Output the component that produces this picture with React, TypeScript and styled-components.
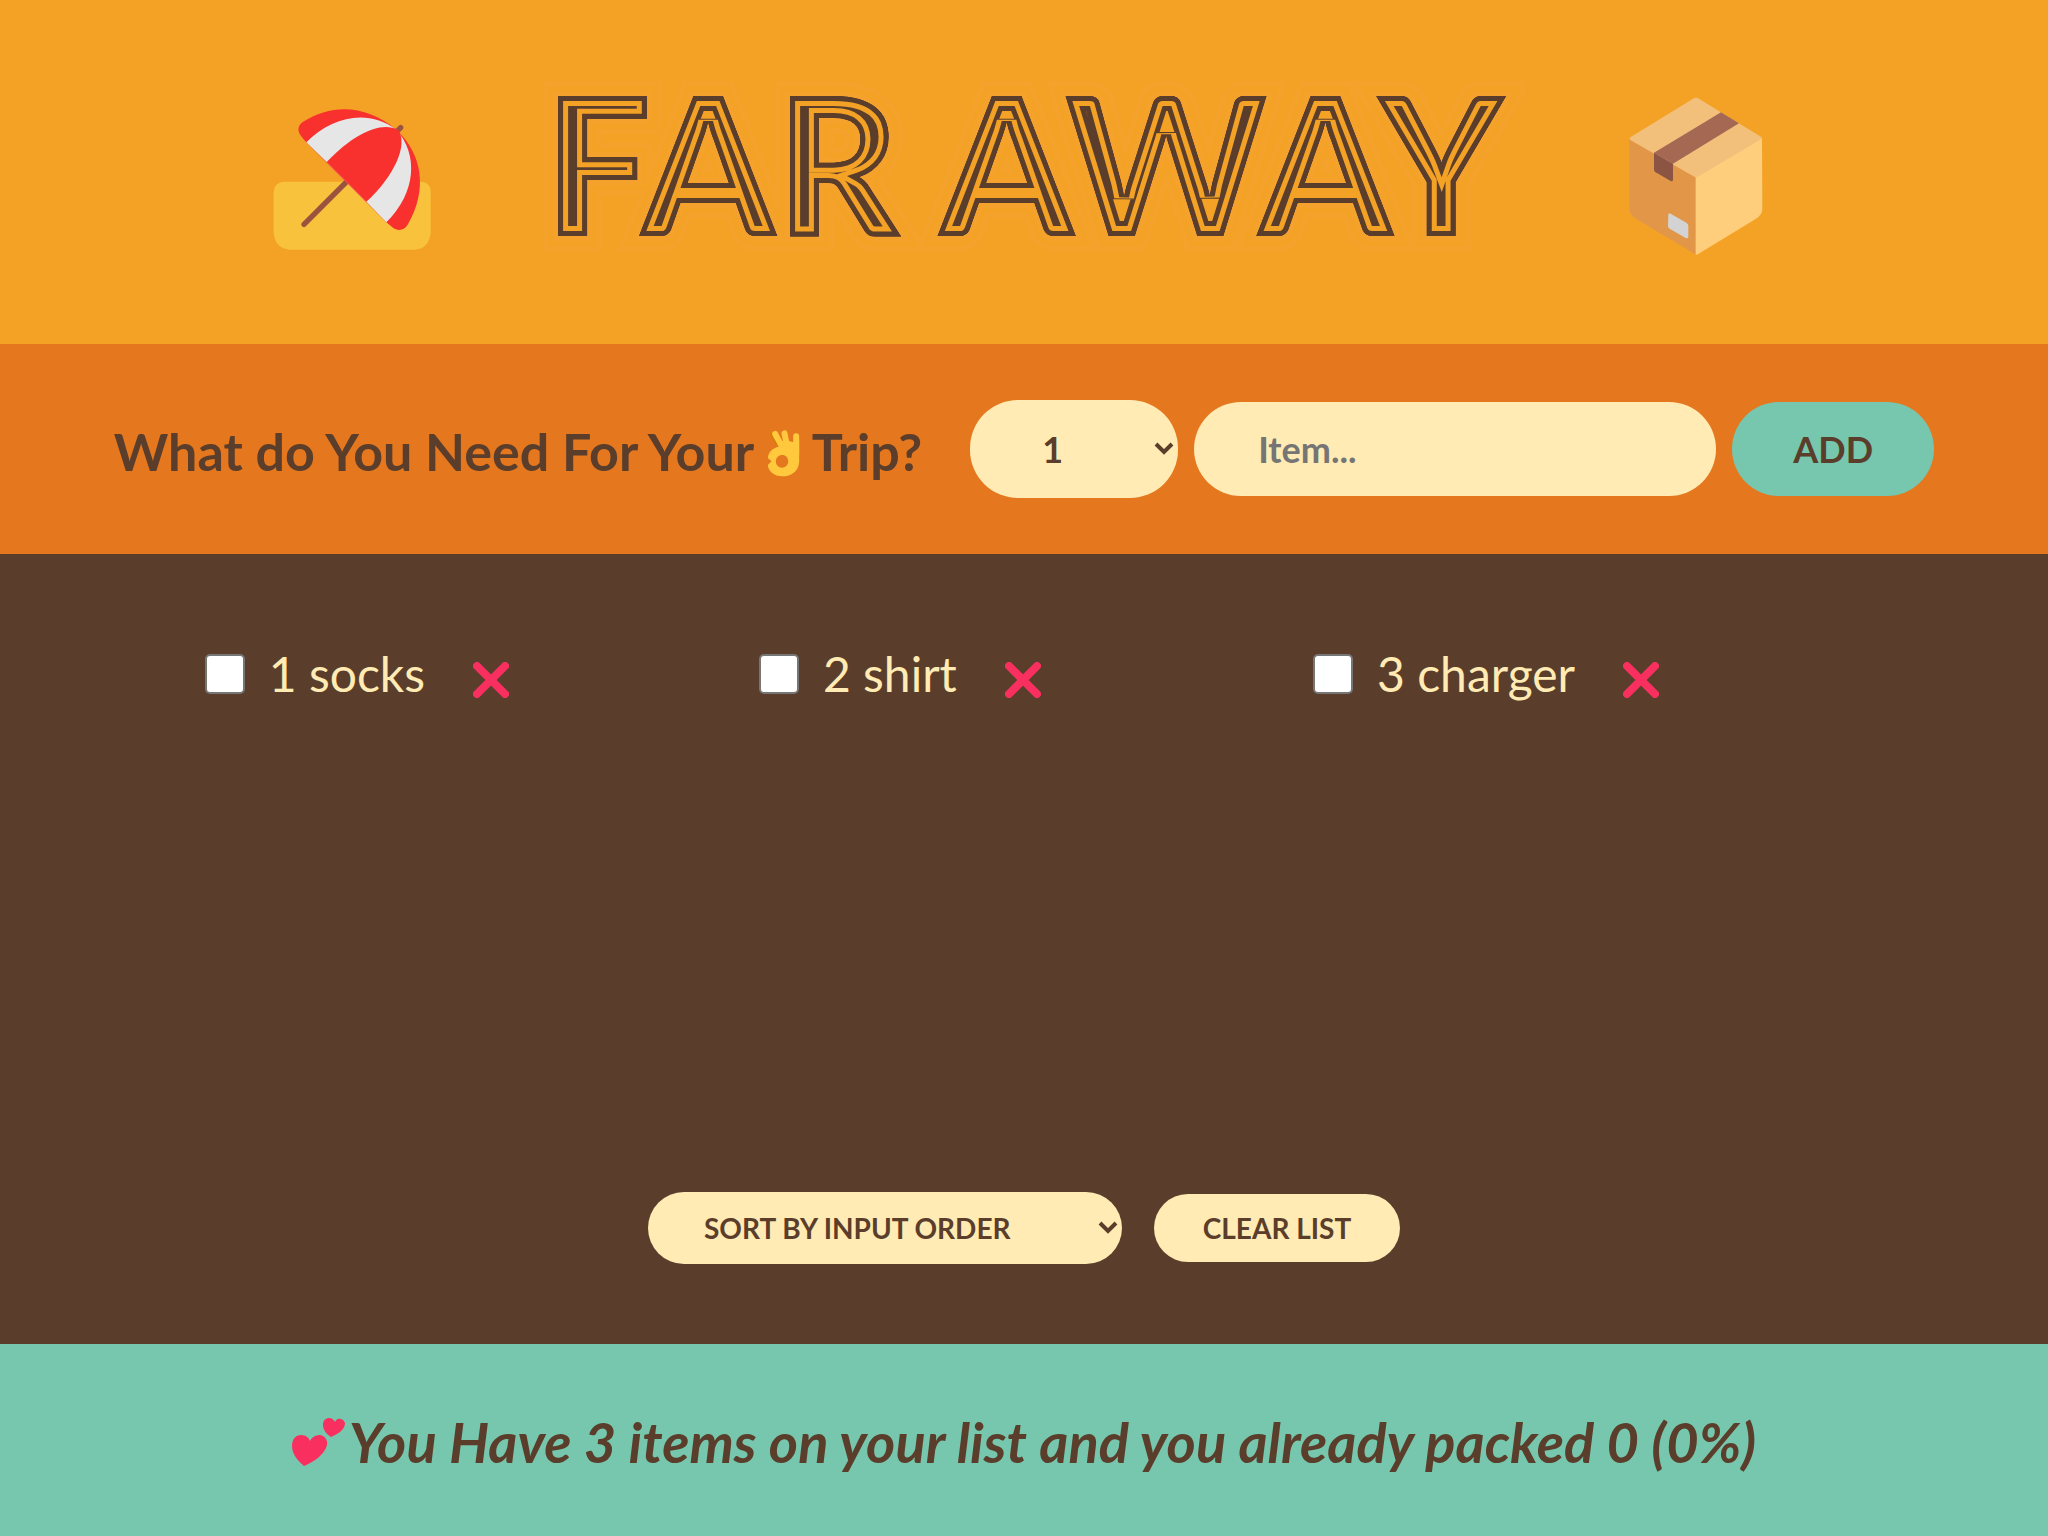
import { useState } from "react";
import type { FormEvent } from "react";
import styled, { createGlobalStyle } from "styled-components";

const color = {
  sun: "#f4a226",
  orange: "#e5771f",
  brown: "#5a3e2b",
  cream: "#ffebb3",
  mint: "#76c7ad",
  pink: "#f92f60",
};

const GlobalStyle = createGlobalStyle`
  * { box-sizing: border-box; margin: 0; padding: 0; }
  body {
    background: ${color.brown};
    color: ${color.brown};
    font-family: Lato, "Open Sans", sans-serif;
    font-size: 48px;
    line-height: 60px;
  }
  button, input, select { font: inherit; color: inherit; }
`;

const Page = styled.div`
  min-height: 100vh;
  display: grid;
  grid-template-rows: auto auto 1fr auto;
`;

const Header = styled.header`
  display: flex;
  justify-content: center;
  align-items: flex-start;
  gap: 108px;
  padding: 92px 0 84px;
  background: ${color.sun};
`;

const Title = styled.h1`
  position: relative;
  isolation: isolate;
  font-family: Lato, sans-serif;
  font-size: 192px;
  font-weight: 900;
  line-height: 140px;
  text-transform: uppercase;
  white-space: nowrap;

  /* keeps the strokes of the layers below inside the letters */
  &::after {
    content: attr(data-text);
    position: absolute;
    inset: -40px;
    padding: 40px;
    background: ${color.sun};
    color: #000;
    mix-blend-mode: lighten;
  }
`;

const TitleLines = styled.span`
  position: relative;
  display: block;
  color: ${color.sun};
  -webkit-text-stroke: 30px ${color.brown};

  &::before,
  &::after {
    content: attr(data-text);
    position: absolute;
    inset: 0;
    color: transparent;
  }
  &::before { -webkit-text-stroke: 20px ${color.sun}; }
  &::after { -webkit-text-stroke: 10px ${color.brown}; }
`;

const HeaderIcon = styled.svg`
  flex: none;
  width: 168px;
  height: 168px;
`;

const AddForm = styled.form`
  display: flex;
  justify-content: center;
  align-items: center;
  gap: 16px;
  padding: 48px 32px;
  min-height: 210px;
  background: ${color.orange};
`;

const FormTitle = styled.h3`
  margin-right: 32px;
  padding-top: 4px;
  font-size: 52px;
  font-weight: 700;
  white-space: nowrap;
`;

const HandIcon = styled.svg`
  width: 35px;
  height: 48px;
  vertical-align: -6px;
`;

const SelectWrap = styled.span<{ $width: number }>`
  position: relative;
  display: flex;
  flex: 0 1 ${(p) => p.$width}px;
`;

const Select = styled.select<{ $small?: boolean }>`
  appearance: none;
  width: 100%;
  height: ${(p) => (p.$small ? 72 : 98)}px;
  padding: 0 ${(p) => (p.$small ? 56 : 72)}px;
  border: 0;
  border-radius: 48px;
  background: ${color.cream};
  font-size: ${(p) => (p.$small ? 28 : 36)}px;
  font-weight: 700;
  line-height: 40px;
  text-transform: ${(p) => (p.$small ? "uppercase" : "none")};
`;

const Chevron = styled.svg`
  position: absolute;
  right: 4px;
  top: 50%;
  width: 20px;
  height: 14px;
  margin-top: -7px;
  pointer-events: none;
`;

const ItemInput = styled.input`
  flex: 0 1 522px;
  min-width: 0;
  height: 94px;
  padding: 0 64px;
  border: 0;
  border-radius: 48px;
  background: ${color.cream};
  font-size: 36px;
  font-weight: 700;
  &::placeholder { color: #757575; }
`;

const Button = styled.button<{ $small?: boolean }>`
  height: ${(p) => (p.$small ? 68 : 94)}px;
  min-width: ${(p) => (p.$small ? 246 : 202)}px;
  border: 0;
  border-radius: 48px;
  background: ${(p) => (p.$small ? color.cream : color.mint)};
  font-size: ${(p) => (p.$small ? 28 : 36)}px;
  font-weight: 700;
  text-transform: uppercase;
  cursor: pointer;
`;

const ListSection = styled.main`
  display: flex;
  flex-direction: column;
  align-items: center;
  justify-content: space-between;
  gap: 64px;
  padding: 90px 0 80px;
  background: ${color.brown};
  color: ${color.cream};
`;

const List = styled.ul`
  width: 80%;
  display: grid;
  grid-template-columns: repeat(auto-fit, minmax(400px, 1fr));
  gap: 24px;
  list-style: none;
`;

const Item = styled.li`
  display: flex;
  align-items: center;
`;

const ItemLabel = styled.label<{ $packed: boolean }>`
  display: flex;
  align-items: center;
  gap: 24px;
  text-decoration: ${(p) => (p.$packed ? "line-through" : "none")};
`;

const Checkbox = styled.input`
  appearance: none;
  width: 40px;
  height: 40px;
  border: 2px solid #767676;
  border-radius: 5px;
  background: #fff;
  &:checked { background: #0075ff; border-color: #0075ff; }
`;

const DeleteButton = styled.button`
  display: flex;
  margin-left: 32px;
  padding: 12px 16px 0;
  border: 0;
  background: none;
  cursor: pointer;
`;

const Actions = styled.div`
  display: flex;
  justify-content: center;
  align-items: center;
  gap: 32px;
  width: 100%;
  color: ${color.brown};
`;

const Stats = styled.footer`
  display: flex;
  justify-content: center;
  align-items: center;
  gap: 4px;
  padding: 68px 32px 64px;
  background: ${color.mint};
  font-size: 56px;
  font-style: italic;
  font-weight: 700;
`;

const HeartsIcon = styled.svg`
  flex: none;
  width: 53px;
  height: 48px;
`;

function Umbrella() {
  return (
    <HeaderIcon viewBox="52 34 504 504" aria-hidden="true">
      <path d="M100 303H508Q540 303 540 335V458Q534 506 490 507H118Q74 504 69 458V335Q69 306 100 303Z" fill="#f9c23c" />
      <path d="M160 431L450 141" stroke="#9b533f" strokeWidth="16" strokeLinecap="round" />
      <path d="M167 185L155 171C139 153 140 137 155 125C250 65 350 76 437 147C512 215 535 325 470 434C460 450 440 452 425 440L407 425Z" fill="#f8312f" />
      <path d="M167 185C245 105 355 85 437 147C503 220 498 335 407 425L347 363L228 244Z" fill="#e6e6e6" />
      <path d="M228 244C315 155 390 123 442 147C474 190 431 287 347 363Z" fill="#f8312f" />
    </HeaderIcon>
  );
}

function Parcel() {
  return (
    <HeaderIcon viewBox="36 34 504 504" aria-hidden="true">
      <path d="M88 174L288 288V522L108 414Q88 402 88 384Z" fill="#e19747" />
      <path d="M486 172L287 290V522Q291 523 296 519L468 414Q487 402 487 384Z" fill="#ffce7c" />
      <path d="M91 170L278 55Q288 48 298 55L484 169Q488 172 484 175L288 291L91 178Q86 174 91 170Z" fill="#f3c07b" />
      <path d="M162 216L363 95L417 128L219 249Z" fill="#a56953" />
      <path d="M162 216L219 249V298Q218 304 212 301L167 275Q162 272 162 267Z" fill="#8c5543" />
      <path d="M205 402Q206 396 212 399L259 426Q265 430 265 435V469Q263 475 257 472L209 444Q204 441 204 436Z" fill="#d3d3d3" />
    </HeaderIcon>
  );
}

function OkHand() {
  return (
    <HandIcon viewBox="24 26 104 144" aria-hidden="true">
      <path d="M46 42L58 64" stroke="#d67d00" strokeWidth="18" strokeLinecap="round" />
      <path
        fillRule="evenodd"
        d="M58 66L84 60L106 66L123 60V124C122 152 100 168 72 168C48 168 30 152 29 134L40 123L29 113C31 94 44 83 62 79ZM72 104C62 104 53 112 53 123C53 135 62 142 72 142C83 142 90 134 90 123C90 112 83 104 72 104Z"
        fill="#ffc83d"
      />
      <g stroke="#ffc83d" strokeWidth="18" strokeLinecap="round">
        <path d="M51 41L68 72" />
        <path d="M79 39L86 74" />
        <path d="M114 48V100" />
      </g>
    </HandIcon>
  );
}

function Hearts() {
  return (
    <HeartsIcon viewBox="0 0 53 48" fill={color.pink} aria-hidden="true">
      <path d="M12 48C4 41 0 35 0 28C0 20 5 17 9 17C14 17 17 20 18 23C20 19 24 17 28 17C33 18 36 22 35 27C33 36 22 44 12 48Z" />
      <path d="M39 19C34 16 31 11 31 7C31 2 34 0 37 0C40 0 42 2 43 4C44 1 47 0 49 1C52 2 53 4 53 6C52 12 46 16 39 19Z" />
    </HeartsIcon>
  );
}

function Arrow() {
  return (
    <Chevron viewBox="0 0 20 14" aria-hidden="true">
      <path d="M2 2L10 10L18 2" fill="none" stroke={color.brown} strokeWidth="4" />
    </Chevron>
  );
}

type PackItem = { id: number; quantity: number; description: string; packed: boolean };

const initialItems: PackItem[] = [
  { id: 1, quantity: 1, description: "socks", packed: false },
  { id: 2, quantity: 2, description: "shirt", packed: false },
  { id: 3, quantity: 3, description: "charger", packed: false },
];

export default function App() {
  const [items, setItems] = useState(initialItems);
  const [quantity, setQuantity] = useState(1);
  const [description, setDescription] = useState("");
  const [sortBy, setSortBy] = useState("input");

  const sorted = [...items].sort((a, b) => {
    if (sortBy === "description") return a.description.localeCompare(b.description);
    if (sortBy === "packed") return Number(a.packed) - Number(b.packed);
    return 0;
  });
  const packed = items.filter((item) => item.packed).length;
  const percent = items.length ? Math.round((packed / items.length) * 100) : 0;

  function handleSubmit(event: FormEvent) {
    event.preventDefault();
    if (!description) return;
    setItems([...items, { id: Date.now(), quantity, description, packed: false }]);
    setDescription("");
    setQuantity(1);
  }

  function toggle(id: number) {
    setItems(items.map((item) => (item.id === id ? { ...item, packed: !item.packed } : item)));
  }

  return (
    <Page>
      <GlobalStyle />
      <Header>
        <Umbrella />
        <Title data-text="Far Away">
          <TitleLines data-text="Far Away">Far Away</TitleLines>
        </Title>
        <Parcel />
      </Header>

      <AddForm onSubmit={handleSubmit}>
        <FormTitle>
          What do You Need For Your <OkHand /> Trip?
        </FormTitle>
        <SelectWrap $width={208}>
          <Select aria-label="Quantity" value={quantity} onChange={(e) => setQuantity(Number(e.target.value))}>
            {Array.from({ length: 20 }, (_, i) => (
              <option key={i} value={i + 1}>
                {i + 1}
              </option>
            ))}
          </Select>
          <Arrow />
        </SelectWrap>
        <ItemInput
          type="text"
          aria-label="Item"
          placeholder="Item..."
          value={description}
          onChange={(e) => setDescription(e.target.value)}
        />
        <Button>Add</Button>
      </AddForm>

      <ListSection>
        <List>
          {sorted.map((item) => (
            <Item key={item.id}>
              <ItemLabel $packed={item.packed}>
                <Checkbox type="checkbox" checked={item.packed} onChange={() => toggle(item.id)} />
                {item.quantity} {item.description}
              </ItemLabel>
              <DeleteButton aria-label="Delete" onClick={() => setItems(items.filter((i) => i.id !== item.id))}>
                <svg width="36" height="36" viewBox="0 0 36 36" aria-hidden="true">
                  <path d="M4 4L32 32M32 4L4 32" stroke={color.pink} strokeWidth="8" strokeLinecap="round" />
                </svg>
              </DeleteButton>
            </Item>
          ))}
        </List>
        <Actions>
          <SelectWrap $width={474}>
            <Select $small aria-label="Sort" value={sortBy} onChange={(e) => setSortBy(e.target.value)}>
              <option value="input">Sort by input order</option>
              <option value="description">Sort by description</option>
              <option value="packed">Sort by packed status</option>
            </Select>
            <Arrow />
          </SelectWrap>
          <Button $small type="button" onClick={() => setItems([])}>
            Clear list
          </Button>
        </Actions>
      </ListSection>

      <Stats>
        <Hearts />
        <em>
          You Have {items.length} items on your list and you already packed {packed} ({percent}%)
        </em>
      </Stats>
    </Page>
  );
}
